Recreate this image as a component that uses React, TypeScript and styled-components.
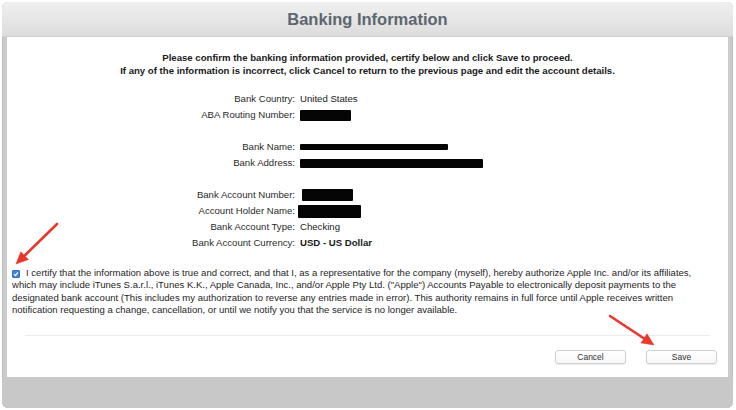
import styled, { createGlobalStyle } from "styled-components";

const GlobalStyle = createGlobalStyle`
  html, body {
    margin: 0;
    padding: 0;
    background: #ffffff;
  }
  body {
    font-family: "Liberation Sans", Arial, sans-serif;
    color: #1e1e1e;
  }
`;

const Page = styled.div`
  position: relative;
  width: 736px;
  height: 410px;
  padding: 2px 3px 2px 2px;
  box-sizing: border-box;
`;

const Window = styled.div`
  height: 406px;
  display: flex;
  flex-direction: column;
  border-radius: 6px;
  background: #cbcbcb;
  box-shadow: inset 0 0 0 1px #bcbcbc;
  overflow: hidden;
`;

const TitleBar = styled.div`
  height: 35px;
  flex: none;
  display: flex;
  align-items: center;
  justify-content: center;
  background: linear-gradient(#f0f0f0, #dcdcdc);
  border-bottom: 1px solid #d0d0d0;
  box-sizing: border-box;
`;

const Title = styled.h1`
  margin: 0;
  font-size: 16.5px;
  font-weight: bold;
  color: #5c666f;
`;

const Panel = styled.div`
  flex: none;
  height: 340px;
  margin: 0 5px 0 5px;
  background: #ffffff;
  display: flex;
  flex-direction: column;
  box-sizing: border-box;
  padding-top: 14px;
`;

const Intro = styled.p`
  margin: 0;
  text-align: center;
  font-size: 9.6px;
  font-weight: bold;
  line-height: 13px;
  color: #1a1a1a;
`;

const Details = styled.div`
  margin-top: 14px;
  display: grid;
  grid-template-columns: 288px 1fr;
  column-gap: 5px;
  grid-auto-rows: 16px;
  font-size: 9.6px;
  line-height: 16px;
`;

const Label = styled.div`
  text-align: right;
  color: #2a2a2a;
`;

const Value = styled.div<{ $bold?: boolean }>`
  display: flex;
  align-items: center;
  font-weight: ${(p) => (p.$bold ? "bold" : "normal")};
  color: #1a1a1a;
`;

const Gap = styled.div<{ $h: number }>`
  grid-column: 1 / -1;
  height: ${(p) => p.$h}px;
`;

const Redacted = styled.span<{ $w: number; $h: number; $dx?: number }>`
  display: inline-block;
  width: ${(p) => p.$w}px;
  height: ${(p) => p.$h}px;
  margin-left: ${(p) => p.$dx ?? 0}px;
  background: #050505;
  border-radius: 1px;
`;

const Certify = styled.p`
  margin: 16px 0 0 5px;
  font-size: 9.55px;
  line-height: 12.3px;
  color: #1e1e1e;
`;

const Check = styled.span`
  display: inline-flex;
  align-items: center;
  justify-content: center;
  width: 8px;
  height: 8px;
  margin-right: 6px;
  vertical-align: -1px;
  border-radius: 2px;
  background: #3f86dc;
  box-shadow: inset 0 0 0 1px #2f6fc2;
`;

const Divider = styled.hr`
  margin: 19px 18px 0 18px;
  border: none;
  border-top: 1px solid #ececec;
`;

const Buttons = styled.div`
  margin-top: 14px;
  display: flex;
  justify-content: flex-end;
  gap: 20px;
  padding-right: 11px;
`;

const Button = styled.button`
  width: 71px;
  height: 14px;
  padding: 0;
  font-family: "Liberation Sans", Arial, sans-serif;
  font-size: 8.5px;
  line-height: 12px;
  color: #333;
  background: linear-gradient(#ffffff, #f7f7f7);
  border: 1px solid #cfcfcf;
  border-radius: 3px;
  box-shadow: 0 1px 1px rgba(0, 0, 0, 0.08);
`;

const Footer = styled.div`
  flex: 1;
  background: #c8c8c8;
`;

const Annotations = styled.svg`
  position: absolute;
  left: 0;
  top: 0;
  pointer-events: none;
`;

function Arrow({ x1, y1, x2, y2 }: { x1: number; y1: number; x2: number; y2: number }) {
  const dx = x2 - x1;
  const dy = y2 - y1;
  const len = Math.hypot(dx, dy);
  const ux = dx / len;
  const uy = dy / len;
  const head = 12;
  const half = 5.5;
  const bx = x2 - ux * head;
  const by = y2 - uy * head;
  const pts = `${x2},${y2} ${bx - uy * half},${by + ux * half} ${bx + uy * half},${by - ux * half}`;
  return (
    <g fill="#e8382b" stroke="#e8382b">
      <line x1={x1} y1={y1} x2={bx + ux * 2} y2={by + uy * 2} strokeWidth={2.6} strokeLinecap="round" />
      <polygon points={pts} strokeWidth={0.5} strokeLinejoin="round" />
    </g>
  );
}

export default function App() {
  return (
    <>
      <GlobalStyle />
      <Page>
        <Window>
          <TitleBar>
            <Title>Banking Information</Title>
          </TitleBar>
          <Panel>
            <Intro>
              Please confirm the banking information provided, certify below and click Save to proceed.
              <br />
              If any of the information is incorrect, click Cancel to return to the previous page and edit the account details.
            </Intro>
            <Details>
              <Label>Bank Country:</Label>
              <Value>United States</Value>
              <Label>ABA Routing Number:</Label>
              <Value>
                <Redacted $w={51} $h={11} />
              </Value>
              <Gap $h={16} />
              <Label>Bank Name:</Label>
              <Value>
                <Redacted $w={148} $h={6} />
              </Value>
              <Label>Bank Address:</Label>
              <Value>
                <Redacted $w={183} $h={9} />
              </Value>
              <Gap $h={14} />
              <Label>Bank Account Number:</Label>
              <Value>
                <Redacted $w={51} $h={12} $dx={2} />
              </Value>
              <Label>Account Holder Name:</Label>
              <Value>
                <Redacted $w={63} $h={13} $dx={-2} />
              </Value>
              <Label>Bank Account Type:</Label>
              <Value>Checking</Value>
              <Label>Bank Account Currency:</Label>
              <Value $bold>USD - US Dollar</Value>
            </Details>
            <Certify>
              <Check>
                <svg width="6" height="6" viewBox="0 0 6 6">
                  <path d="M1 3.2 L2.4 4.6 L5 1.4" fill="none" stroke="#fff" strokeWidth="1.2" />
                </svg>
              </Check>
              I certify that the information above is true and correct, and that I, as a representative for the company (myself), hereby authorize Apple Inc. and/or its affiliates,
              <br />
              which may include iTunes S.a.r.l., iTunes K.K., Apple Canada, Inc., and/or Apple Pty Ltd. ("Apple") Accounts Payable to electronically deposit payments to the
              <br />
              designated bank account (This includes my authorization to reverse any entries made in error). This authority remains in full force until Apple receives written
              <br />
              notification requesting a change, cancellation, or until we notify you that the service is no longer available.
            </Certify>
            <Divider />
            <Buttons>
              <Button>Cancel</Button>
              <Button>Save</Button>
            </Buttons>
          </Panel>
          <Footer />
        </Window>
        <Annotations width={736} height={410}>
          <Arrow x1={57} y1={224} x2={16} y2={264} />
          <Arrow x1={610} y1={316} x2={654} y2={345} />
        </Annotations>
      </Page>
    </>
  );
}
